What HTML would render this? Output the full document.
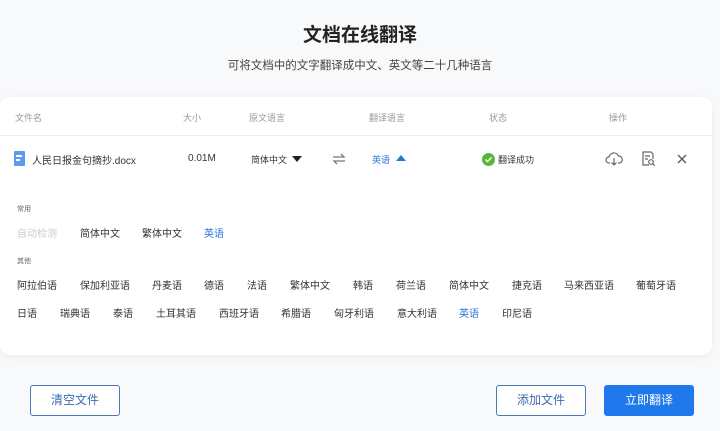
<!DOCTYPE html><html><head><meta charset="utf-8"><style>
*{margin:0;padding:0;box-sizing:border-box}
body{width:720px;height:431px;overflow:hidden;background:#f8f9fb;font-family:"Liberation Sans","Noto Sans CJK SC",sans-serif;position:relative;color:#333}
.a{position:absolute;white-space:nowrap}
.card{position:absolute;left:0;top:97px;width:712px;height:258px;background:#fff;border-radius:10px;box-shadow:0 2px 8px rgba(0,0,0,.06)}
.h{font-size:9px;color:#999;top:111px}
.l{font-size:10px;color:#333}
.btn{position:absolute;top:385px;width:90px;height:31px;border:1px solid #4a78b8;border-radius:3px;font-size:12px;color:#3a6cb0;text-align:center;line-height:29px;background:#fff}
</style></head><body>
<div class="a" style="left:0;width:720px;text-align:center;top:20px;font-size:19px;font-weight:bold;color:#222">文档在线翻译</div>
<div class="a" style="left:0;width:720px;text-align:center;top:57px;font-size:11.5px;color:#444">可将文档中的文字翻译成中文、英文等二十几种语言</div>
<div class="card"></div>
<div style="position:absolute;left:0;top:135px;width:712px;height:1px;background:#eee"></div>
<div class="a h" style="left:15px">文件名</div>
<div class="a h" style="left:183px">大小</div>
<div class="a h" style="left:249px">原文语言</div>
<div class="a h" style="left:369px">翻译语言</div>
<div class="a h" style="left:489px">状态</div>
<div class="a h" style="left:609px">操作</div>
<div class="a" style="left:14px;top:151px;width:11px;height:15px;background:#5d9af2;border-radius:1px"></div>
<div class="a" style="left:16px;top:155px;width:6px;height:1.5px;background:#fff"></div>
<div class="a" style="left:16px;top:159px;width:4px;height:1.5px;background:#fff"></div>
<div class="a l" style="left:32px;top:152px">人民日报金句摘抄.docx</div>
<div class="a l" style="left:188px;top:153px">0.01M</div>
<div class="a" style="left:251px;top:153px;font-size:9px">简体中文</div>
<div class="a" style="left:292px;top:156px;width:0;height:0;border-left:5px solid transparent;border-right:5px solid transparent;border-top:6px solid #222"></div>
<svg class="a" style="left:332px;top:153px" width="14" height="12" viewBox="0 0 14 12"><path d="M1 4h11l-3-3M13 8H2l3 3" fill="none" stroke="#777" stroke-width="1.3"/></svg>
<div class="a" style="left:372px;top:153px;font-size:9px;color:#2a73d8">英语</div>
<div class="a" style="left:396px;top:155px;width:0;height:0;border-left:5px solid transparent;border-right:5px solid transparent;border-bottom:6px solid #2a73d8"></div>
<div class="a" style="left:482px;top:153px;width:13px;height:13px;border-radius:50%;background:#5bb536"></div>
<svg class="a" style="left:482px;top:153px" width="13" height="13"><path d="M3.5 6.5l2 2 4-4" fill="none" stroke="#fff" stroke-width="1.5"/></svg>
<div class="a" style="left:498px;top:153px;font-size:9px">翻译成功</div>
<svg class="a" style="left:605px;top:151px" width="18" height="16" viewBox="0 0 18 16"><path d="M5 12H4a3 3 0 010-6 5 5 0 019.5-1A3.5 3.5 0 0114 12h-1M9 7v7m-2.5-2.5L9 14l2.5-2.5" fill="none" stroke="#666" stroke-width="1.2"/></svg>
<svg class="a" style="left:641px;top:151px" width="15" height="16" viewBox="0 0 15 16"><path d="M8 14H2V1h8l2 2v5M4 5h5M4 8h3" fill="none" stroke="#666" stroke-width="1.2"/><circle cx="10" cy="11" r="2.3" fill="none" stroke="#666" stroke-width="1.2"/><path d="M11.7 12.7l2 2" stroke="#666" stroke-width="1.2"/></svg>
<svg class="a" style="left:677px;top:154px" width="10" height="10"><path d="M1 1l8 8M9 1l-8 8" stroke="#555" stroke-width="1.3"/></svg>
<div class="a" style="left:17px;top:204px;font-size:7px;color:#666">常用</div>
<div class="a l" style="left:17px;top:225px;color:#ccc">自动检测</div>
<div class="a l" style="left:80px;top:225px">简体中文</div>
<div class="a l" style="left:142px;top:225px">繁体中文</div>
<div class="a l" style="left:204px;top:225px;color:#2a73d8">英语</div>
<div class="a" style="left:17px;top:256px;font-size:7px;color:#666">其他</div>
<div class="a l" style="left:17px;top:277px">阿拉伯语</div>
<div class="a l" style="left:80px;top:277px">保加利亚语</div>
<div class="a l" style="left:152px;top:277px">丹麦语</div>
<div class="a l" style="left:204px;top:277px">德语</div>
<div class="a l" style="left:247px;top:277px">法语</div>
<div class="a l" style="left:290px;top:277px">繁体中文</div>
<div class="a l" style="left:353px;top:277px">韩语</div>
<div class="a l" style="left:396px;top:277px">荷兰语</div>
<div class="a l" style="left:449px;top:277px">简体中文</div>
<div class="a l" style="left:512px;top:277px">捷克语</div>
<div class="a l" style="left:564px;top:277px">马来西亚语</div>
<div class="a l" style="left:636px;top:277px">葡萄牙语</div>
<div class="a l" style="left:17px;top:305px">日语</div>
<div class="a l" style="left:60px;top:305px">瑞典语</div>
<div class="a l" style="left:113px;top:305px">泰语</div>
<div class="a l" style="left:156px;top:305px">土耳其语</div>
<div class="a l" style="left:219px;top:305px">西班牙语</div>
<div class="a l" style="left:281px;top:305px">希腊语</div>
<div class="a l" style="left:334px;top:305px">匈牙利语</div>
<div class="a l" style="left:397px;top:305px">意大利语</div>
<div class="a l" style="left:459px;top:305px;color:#2a73d8">英语</div>
<div class="a l" style="left:502px;top:305px">印尼语</div>
<div class="btn" style="left:30px">清空文件</div>
<div class="btn" style="left:496px">添加文件</div>
<div class="btn" style="left:604px;background:#1f78ec;border-color:#1f78ec;color:#fff">立即翻译</div>
</body></html>
